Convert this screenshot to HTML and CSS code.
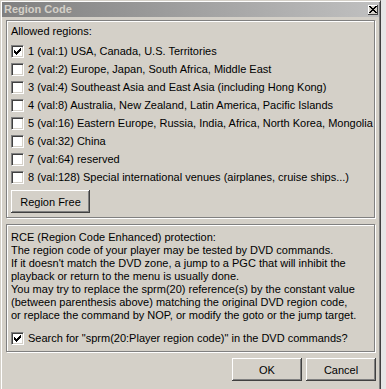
FILE: index.html
```html
<!DOCTYPE html>
<html lang="en">
<head>
<meta charset="UTF-8">
<title>Region Code</title>
<link rel="stylesheet" href="styles.css">
</head>
<body>
	<div class="window">
		<div class="titlebar">
			<span class="title">Region Code</span>
			<span class="close-btn">
				<svg width="8" height="7" viewBox="0 0 8 7"><path d="M0 0h2v1h-2zM6 0h2v1h-2zM1 1h2v1h-2zM5 1h2v1h-2zM2 2h4v1h-4zM3 3h2v1h-2zM2 4h4v1h-4zM1 5h2v1h-2zM5 5h2v1h-2zM0 6h2v1h-2zM6 6h2v1h-2z" fill="#000"/></svg>
			</span>
		</div>

		<div class="content">
			<div class="group group-regions">
				<div class="label">Allowed regions:</div>
				<div class="check-list">
					<div class="check-row"><span class="box checked"><svg width="11" height="11" viewBox="1 1 11 11"><path d="M3 5h1v3H3zM4 6h1v3H4zM5 7h1v3H5zM6 6h1v3H6zM7 5h1v3H7zM8 4h1v3H8zM9 3h1v3H9z"/></svg></span>1 (val:1) USA, Canada, U.S. Territories</div>
					<div class="check-row"><span class="box"></span>2 (val:2) Europe, Japan, South Africa, Middle East</div>
					<div class="check-row"><span class="box"></span>3 (val:4) Southeast Asia and East Asia (including Hong Kong)</div>
					<div class="check-row"><span class="box"></span>4 (val:8) Australia, New Zealand, Latin America, Pacific Islands</div>
					<div class="check-row"><span class="box"></span>5 (val:16) Eastern Europe, Russia, India, Africa, North Korea, Mongolia</div>
					<div class="check-row"><span class="box"></span>6 (val:32) China</div>
					<div class="check-row"><span class="box"></span>7 (val:64) reserved</div>
					<div class="check-row"><span class="box"></span>8 (val:128) Special international venues (airplanes, cruise ships...)</div>
				</div>
				<button class="btn btn-free">Region Free</button>
			</div>

			<div class="group group-rce">
				<div class="text">
					RCE (Region Code Enhanced) protection:<br>
					The region code of your player may be tested by DVD commands.<br>
					If it doesn't match the DVD zone, a jump to a PGC that will inhibit the<br>
					playback or return to the menu is usually done.<br>
					You may try to replace the sprm(20) reference(s) by the constant value<br>
					(between parenthesis above) matching the original DVD region code,<br>
					or replace the command by NOP, or modify the goto or the jump target.
				</div>
				<div class="check-row search-row"><span class="box checked"><svg width="11" height="11" viewBox="1 1 11 11"><path d="M3 5h1v3H3zM4 6h1v3H4zM5 7h1v3H5zM6 6h1v3H6zM7 5h1v3H7zM8 4h1v3H8zM9 3h1v3H9z"/></svg></span>Search for "sprm(20:Player region code)" in the DVD commands?</div>
			</div>

			<div class="buttons">
				<button class="btn btn-dlg">OK</button>
				<button class="btn btn-dlg">Cancel</button>
			</div>
		</div>
	</div>
</body>
</html>
```

FILE: styles.css
```css
/* classic dialog */
body {
	margin: 0;
	background: #e6e6e6;
	font-family: "Liberation Sans", Arial, sans-serif;
	font-size: 11px;
	color: #000;
	overflow: hidden;
}
.window {
	width: 381px;
	height: 400px;
	box-sizing: border-box;
	background: #d4d0c8;
	border: 1px solid;
	border-color: #d4d0c8 #404040 #404040 #d4d0c8;
	box-shadow: inset 1px 1px #fff, inset -1px -1px #808080;
	padding: 1px;
}
.titlebar {
	height: 15px;
	display: flex;
	align-items: center;
	justify-content: space-between;
	background: linear-gradient(to right, #808080, #c0c0c0);
	padding: 0 1px 0 2px;
}
.title {
	color: #d4d0c8;
	font-weight: bold;
	line-height: 15px;
}
.close-btn {
	width: 10px;
	height: 10px;
	box-sizing: border-box;
	display: flex;
	align-items: center;
	justify-content: center;
	background: #d4d0c8;
	box-shadow: inset -1px -1px #404040, inset 1px 1px #fff;
}
.content {
	padding: 3px 4px 0 4px;
}
.group {
	border: 1px solid #808080;
	box-shadow: inset 1px 1px #fff, 1px 1px #fff;
	padding: 0 3px 0 4px;
}
.group-regions {
	padding-top: 4px;
	padding-bottom: 4px;
}
.label, .text {
	line-height: 13px;
	white-space: nowrap;
}
.check-list {
	margin-top: 4px;
}
.check-row {
	height: 18px;
	display: flex;
	align-items: center;
	white-space: nowrap;
}
.box {
	width: 13px;
	height: 13px;
	box-sizing: border-box;
	flex: none;
	margin-right: 4px;
	background: #fff;
	border: 1px solid;
	border-color: #808080 #fff #fff #808080;
	box-shadow: inset 1px 1px #404040, inset -1px -1px #d4d0c8;
}
.box svg {
	display: block;
}
.btn {
	font-family: "Liberation Sans", Arial, sans-serif;
	font-size: 11px;
	color: #000;
	height: 23px;
	background: #d4d0c8;
	border: none;
	padding: 0;
	box-shadow: inset -1px -1px #404040, inset 1px 1px #fff, inset -2px -2px #808080;
}
.btn-free {
	display: block;
	width: 79px;
	margin-top: 4px;
}
.group-rce {
	margin-top: 6px;
	padding-top: 6px;
	padding-bottom: 4px;
}
.search-row {
	margin-top: 7px;
}
.buttons {
	display: flex;
	justify-content: flex-end;
	gap: 4px;
	margin-top: 6px;
	margin-right: -1px;
}
.btn-dlg {
	width: 70px;
}
```
